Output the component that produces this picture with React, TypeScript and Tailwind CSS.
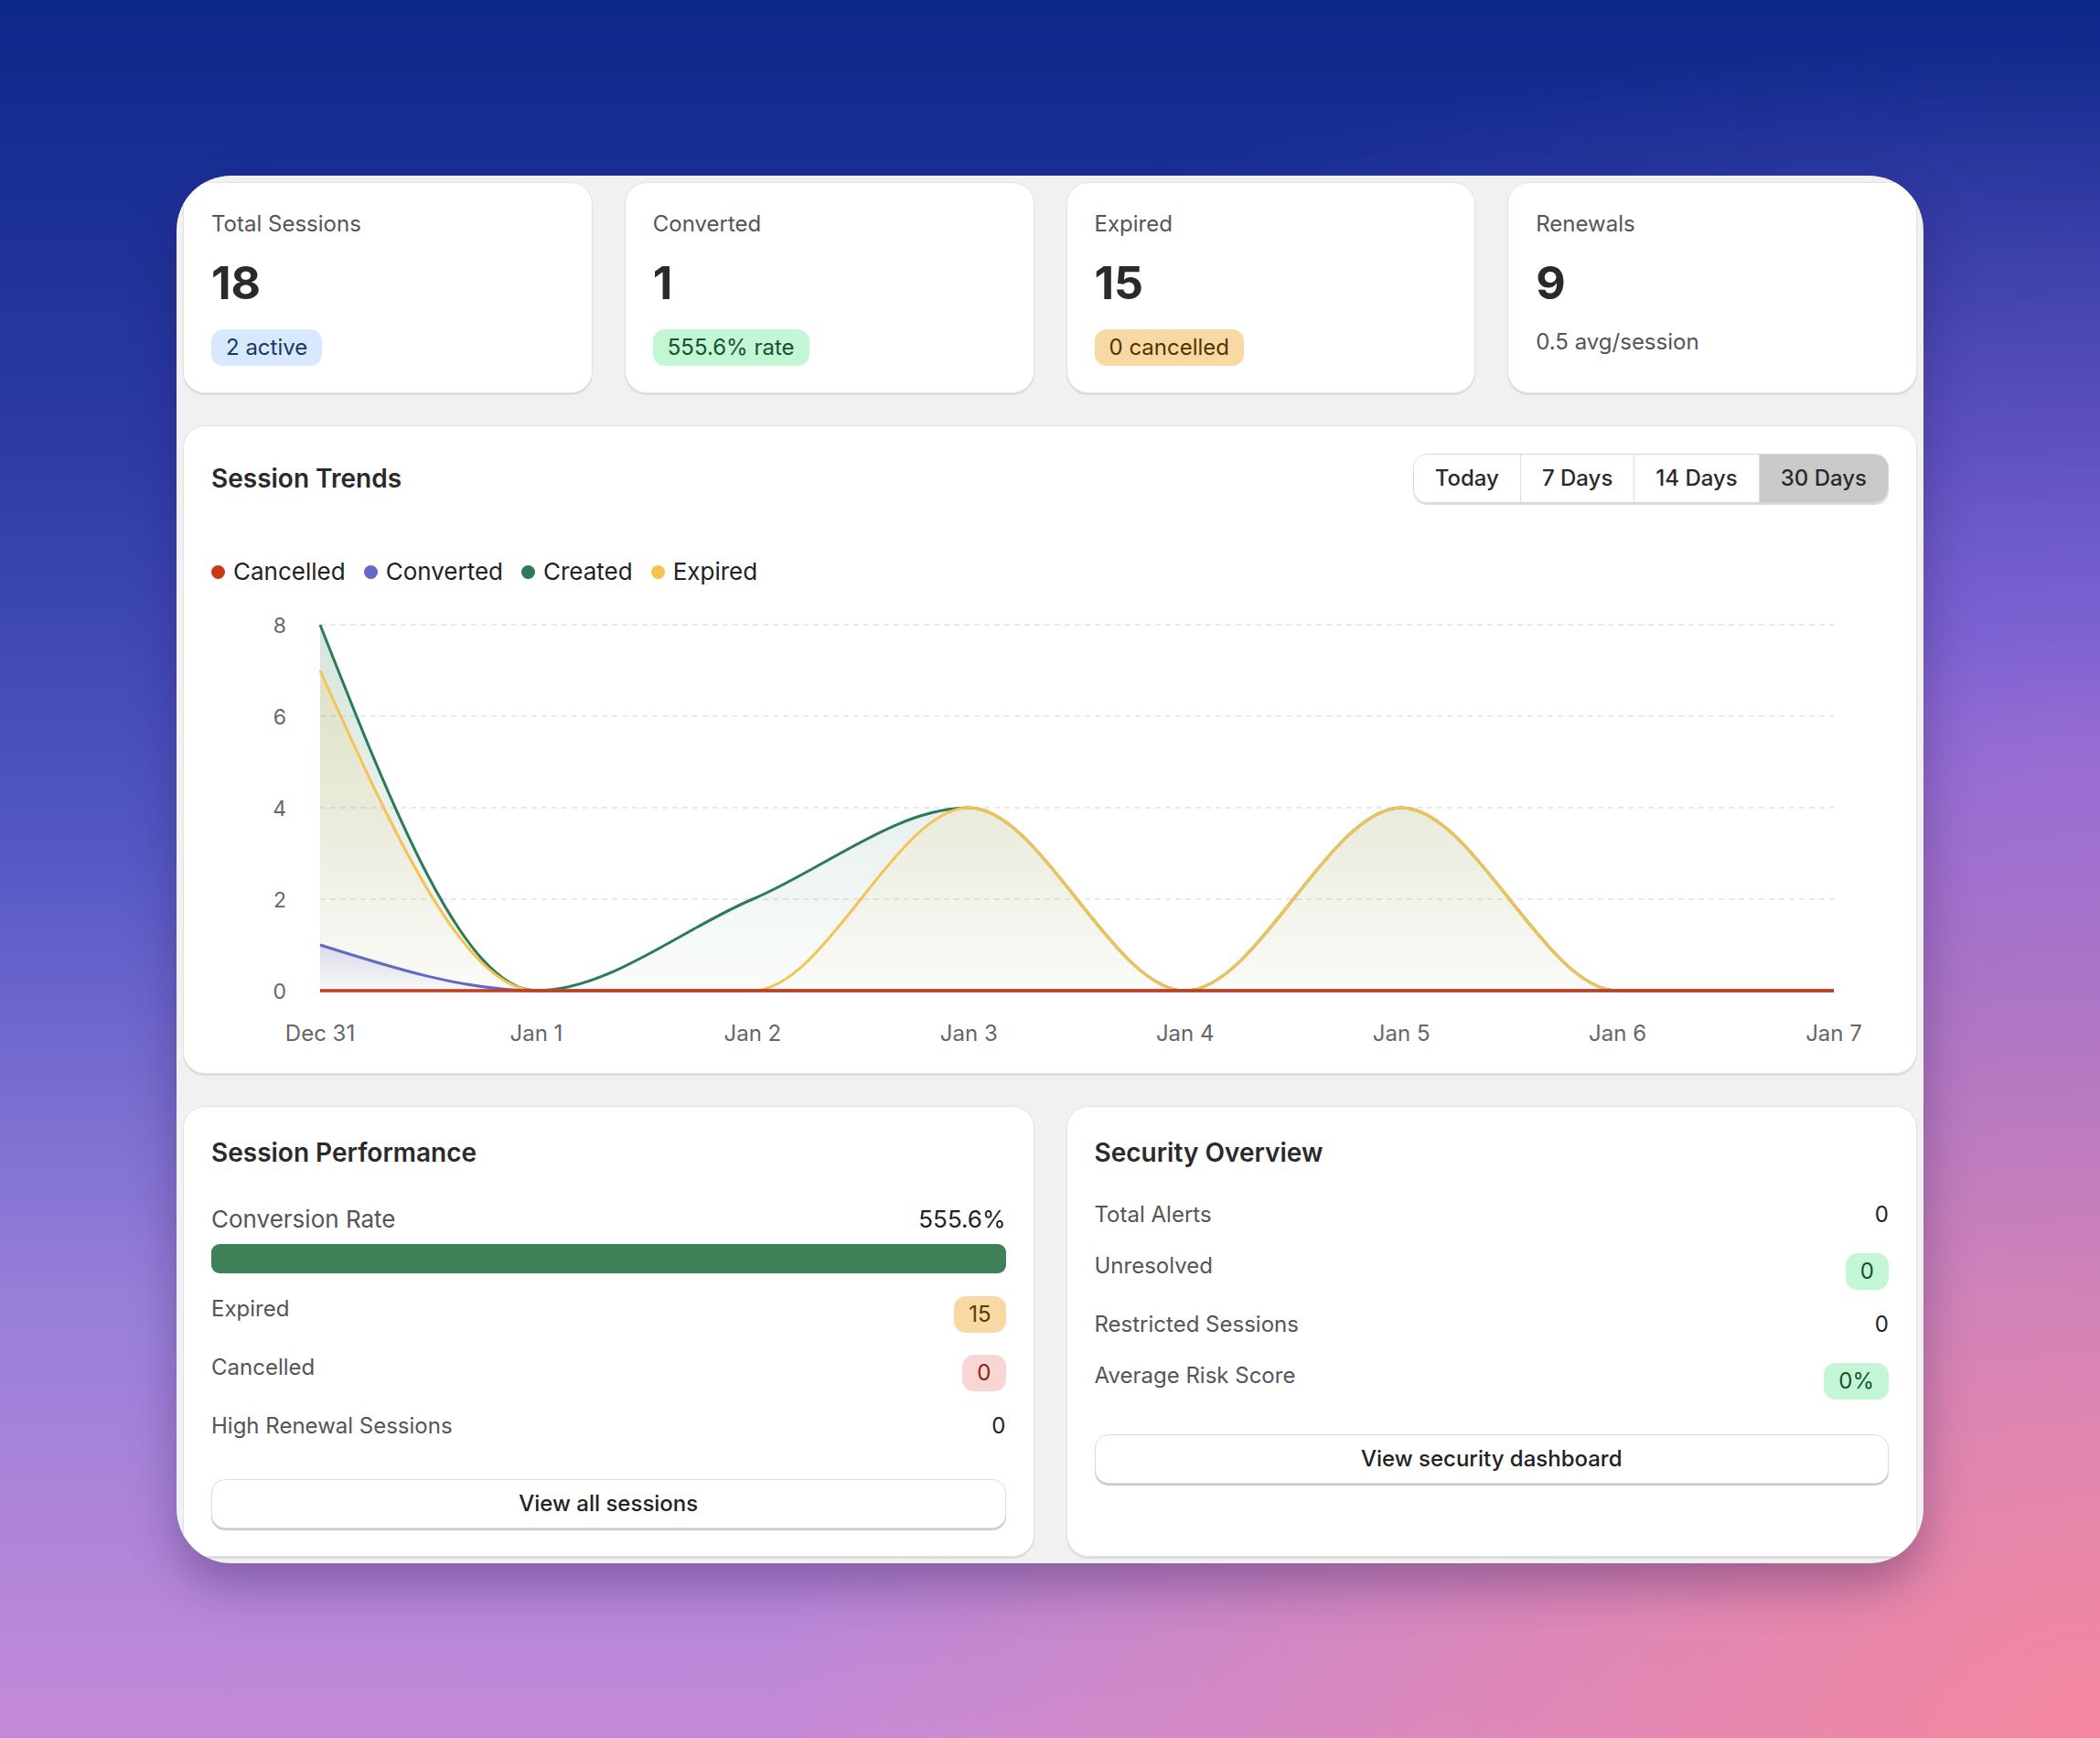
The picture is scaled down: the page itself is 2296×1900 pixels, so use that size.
type Stat = {
  label: string;
  value: string;
  badge?: { text: string; cls: string };
  note?: string;
};

const stats: Stat[] = [
  { label: "Total Sessions", value: "18", badge: { text: "2 active", cls: "bg-[#d7e8ff] text-[#173a60]" } },
  { label: "Converted", value: "1", badge: { text: "555.6% rate", cls: "bg-[#c3f6d5] text-[#15532f]" } },
  { label: "Expired", value: "15", badge: { text: "0 cancelled", cls: "bg-[#f8d8a3] text-[#4f3600]" } },
  { label: "Renewals", value: "9", note: "0.5 avg/session" },
];

const dates = ["Dec 31", "Jan 1", "Jan 2", "Jan 3", "Jan 4", "Jan 5", "Jan 6", "Jan 7"];

const series = [
  { key: "created", name: "Created", color: "#2b7b5a", data: [8, 0, 2, 4, 0, 4, 0, 0], w: 3 },
  { key: "expired", name: "Expired", color: "#f5c352", data: [7, 0, 0, 4, 0, 4, 0, 0], w: 3 },
  { key: "converted", name: "Converted", color: "#6467c6", data: [1, 0, 0, 0, 0, 0, 0, 0], w: 3 },
  { key: "cancelled", name: "Cancelled", color: "#c63c1a", data: [0, 0, 0, 0, 0, 0, 0, 0], w: 3.5 },
];

const legend = [
  { name: "Cancelled", color: "bg-[#c63c1a]" },
  { name: "Converted", color: "bg-[#6467c6]" },
  { name: "Created", color: "bg-[#2b7b5a]" },
  { name: "Expired", color: "bg-[#f5c352]" },
];

// chart geometry (svg coords)
const W = 1834;
const H = 500;
const X0 = 119;
const STEP = 236.43;
const Y0 = 440;
const UNIT = 50;

const sx = (i: number) => X0 + i * STEP;
const sy = (v: number) => Y0 - v * UNIT;

// d3-style monotoneX
function monotonePath(pts: [number, number][]) {
  const n = pts.length;
  const sign = (x: number) => (x < 0 ? -1 : 1);
  const t: number[] = new Array(n).fill(0);
  for (let i = 1; i < n - 1; i++) {
    const [x0, y0] = pts[i - 1];
    const [x1, y1] = pts[i];
    const [x2, y2] = pts[i + 1];
    const h0 = x1 - x0;
    const h1 = x2 - x1;
    const s0 = (y1 - y0) / h0;
    const s1 = (y2 - y1) / h1;
    const p = (s0 * h1 + s1 * h0) / (h0 + h1);
    t[i] = (sign(s0) + sign(s1)) * Math.min(Math.abs(s0), Math.abs(s1), 0.5 * Math.abs(p)) || 0;
  }
  const h = pts[1][0] - pts[0][0];
  t[0] = (3 * (pts[1][1] - pts[0][1]) / h - t[1]) / 2;
  const hl = pts[n - 1][0] - pts[n - 2][0];
  t[n - 1] = (3 * (pts[n - 1][1] - pts[n - 2][1]) / hl - t[n - 2]) / 2;

  let d = `M${pts[0][0]},${pts[0][1]}`;
  for (let i = 0; i < n - 1; i++) {
    const [xa, ya] = pts[i];
    const [xb, yb] = pts[i + 1];
    const dx = (xb - xa) / 3;
    d += ` C${xa + dx},${ya + dx * t[i]} ${xb - dx},${yb - dx * t[i + 1]} ${xb},${yb}`;
  }
  return d;
}

function TrendChart() {
  return (
    <svg width={W} height={H} className="block">
      <defs>
        {series.map((s) => (
          <linearGradient key={s.key} id={`g-${s.key}`} x1="0" y1="0" x2="0" y2="1">
            <stop offset="0%" stopColor={s.color} stopOpacity={0.2} />
            <stop offset="100%" stopColor={s.color} stopOpacity={0.02} />
          </linearGradient>
        ))}
      </defs>

      {[8, 6, 4, 2].map((v) => (
        <line key={v} x1={X0} x2={sx(7)} y1={sy(v)} y2={sy(v)} stroke="#e2e2e2" strokeWidth={1.5} strokeDasharray="6 5" />
      ))}

      {[0, 2, 4, 6, 8].map((v) => (
        <text key={v} x={82} y={sy(v) + 8.5} textAnchor="end" fontSize={23} fill="#666">
          {v}
        </text>
      ))}

      {dates.map((d, i) => (
        <text key={d} x={sx(i)} y={495} textAnchor="middle" fontSize={24} fill="#666">
          {d}
        </text>
      ))}

      {series.map((s) => {
        const pts = s.data.map((v, i) => [sx(i), sy(v)] as [number, number]);
        const line = monotonePath(pts);
        const area = `${line} L${sx(7)},${Y0} L${sx(0)},${Y0} Z`;
        return (
          <g key={s.key}>
            {s.data.some((v) => v > 0) && <path d={area} fill={`url(#g-${s.key})`} />}
            <path d={line} fill="none" stroke={s.color} strokeWidth={s.w} />
          </g>
        );
      })}
    </svg>
  );
}

function Badge({ text, cls }: { text: string; cls: string }) {
  return (
    <span className={`inline-flex h-[40px] items-center rounded-[13px] px-[16px] text-[24px] ${cls}`}>
      {text}
    </span>
  );
}

function Row({ label, children, badge }: { label: string; children: React.ReactNode; badge?: boolean }) {
  return (
    <div className="flex items-start justify-between">
      <span className="text-[24px] leading-[36px] text-[#555]">{label}</span>
      {badge ? <div className="mt-[4px]">{children}</div> : <span className="text-[24px] leading-[36px] text-[#222]">{children}</span>}
    </div>
  );
}

const card = "rounded-[24px] border border-[#e2e2e2] bg-white shadow-[0_2px_1px_rgba(0,0,0,0.09)]";
const button =
  "flex h-[54px] w-full items-center justify-center rounded-[15px] border border-[#dcdcdc] bg-white text-[24px] font-medium text-[#222] shadow-[0_2px_1px_rgba(0,0,0,0.22)]";

export default function App() {
  return (
    <div className="flex min-h-screen w-full justify-center bg-[radial-gradient(ellipse_at_100%_100%,#f5879f_0%,rgba(245,135,159,0)_45%),radial-gradient(ellipse_at_100%_45%,rgba(165,115,228,0.75)_0%,rgba(165,115,228,0)_55%),linear-gradient(180deg,#0c2889_0%,#2c3aa6_25%,#5257c4_48%,#987fd9_75%,#c48ad8_100%)] pt-[192px] pb-[191px] font-['Inter',sans-serif]">
      <div className="w-[1910px] overflow-hidden rounded-[60px] bg-[#f1f1f1] p-[7px] shadow-[0_24px_50px_rgba(40,20,80,0.35)]">
        <div className="flex flex-col gap-[35px]">
          {/* stats */}
          <div className="grid grid-cols-4 gap-[35px]">
            {stats.map((s) => (
              <div key={s.label} className={`${card} h-[231px] px-[30px] pt-[27px]`}>
                <div className="text-[24px] leading-[36px] text-[#555]">{s.label}</div>
                <div className="mt-[16px] text-[50px] font-bold leading-[60px] text-[#2a2a2a]">{s.value}</div>
                {s.badge ? (
                  <div className="mt-[21px]">
                    <Badge text={s.badge.text} cls={s.badge.cls} />
                  </div>
                ) : (
                  <div className="mt-[17px] text-[24px] leading-[36px] text-[#555]">{s.note}</div>
                )}
              </div>
            ))}
          </div>

          {/* trends */}
          <div className={`${card} p-[30px]`}>
            <div className="flex h-[54px] items-center justify-between">
              <h2 className="text-[28px] font-semibold text-[#2a2a2a]">Session Trends</h2>
              <div className="flex h-[54px] overflow-hidden rounded-[15px] border border-[#d6d6d6] shadow-[0_2px_1px_rgba(0,0,0,0.15)]">
                {["Today", "7 Days", "14 Days", "30 Days"].map((t, i) => (
                  <button
                    key={t}
                    className={`px-[23px] text-[24px] font-medium text-[#2a2a2a] ${i > 0 ? "border-l border-[#dcdcdc]" : ""} ${t === "30 Days" ? "bg-[#cacaca]" : "bg-white"}`}
                  >
                    {t}
                  </button>
                ))}
              </div>
            </div>

            <div className="mt-[57px] flex items-center gap-[20px] text-[26px] leading-[36px] text-[#222]">
              {legend.map((l) => (
                <div key={l.name} className="flex items-center gap-[9px]">
                  <span className={`h-[15px] w-[15px] rounded-full ${l.color}`} />
                  <span>{l.name}</span>
                </div>
              ))}
            </div>

            <TrendChart />
          </div>

          {/* bottom */}
          <div className="grid grid-cols-2 gap-[35px]">
            <div className={`${card} p-[30px]`}>
              <h2 className="text-[28px] font-semibold leading-[40px] text-[#2a2a2a]">Session Performance</h2>
              <div className="mt-[35px] flex justify-between text-[26px] leading-[36px]">
                <span className="text-[#555]">Conversion Rate</span>
                <span className="text-[#222]">555.6%</span>
              </div>
              <div className="mt-[9px] h-[32px] w-full rounded-[9px] bg-[#3e8158]" />
              <div className="mt-[21px] flex flex-col gap-[20px]">
                <Row label="Expired" badge>
                  <Badge text="15" cls="bg-[#f8d8a3] text-[#5a3d00]" />
                </Row>
                <Row label="Cancelled" badge>
                  <Badge text="0" cls="bg-[#f8d6d3] text-[#8e2410]" />
                </Row>
                <Row label="High Renewal Sessions">0</Row>
              </div>
              <button className={`${button} mt-[40px]`}>View all sessions</button>
            </div>

            <div className={`${card} p-[30px]`}>
              <h2 className="text-[28px] font-semibold leading-[40px] text-[#2a2a2a]">Security Overview</h2>
              <div className="mt-[30px] flex flex-col gap-[20px]">
                <Row label="Total Alerts">0</Row>
                <Row label="Unresolved" badge>
                  <Badge text="0" cls="bg-[#c3f6d5] text-[#15532f]" />
                </Row>
                <Row label="Restricted Sessions">0</Row>
                <Row label="Average Risk Score" badge>
                  <Badge text="0%" cls="bg-[#c3f6d5] text-[#15532f]" />
                </Row>
              </div>
              <button className={`${button} mt-[38px]`}>View security dashboard</button>
            </div>
          </div>
        </div>
      </div>
    </div>
  );
}
